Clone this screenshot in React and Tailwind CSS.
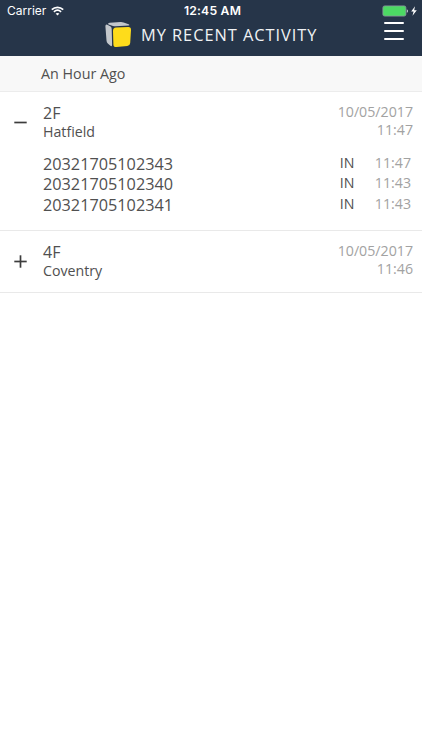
import React, { useState } from 'react';

const activity = [
  {
    id: 1,
    name: '2F',
    place: 'Hatfield',
    date: '10/05/2017',
    time: '11:47',
    items: [
      { code: '20321705102343', direction: 'IN', time: '11:47' },
      { code: '20321705102340', direction: 'IN', time: '11:43' },
      { code: '20321705102341', direction: 'IN', time: '11:43' },
    ],
  },
  {
    id: 2,
    name: '4F',
    place: 'Coventry',
    date: '10/05/2017',
    time: '11:46',
    items: [{ code: '20321705102339', direction: 'IN', time: '11:46' }],
  },
];

const WifiIcon = () => (
  <svg className="w-[13px] h-[10px]" viewBox="0 0 13 10" fill="none" stroke="#fff" strokeWidth="1.7">
    <path d="M0.8 3.6C4 0.5 9 0.5 12.2 3.6" />
    <path d="M2.9 5.8C5 3.9 8 3.9 10.1 5.8" />
    <path d="M6.5 9.6L4.6 7.6C5.6 6.7 7.4 6.7 8.4 7.6Z" fill="#fff" stroke="none" />
  </svg>
);

const BatteryIcon = () => (
  <svg className="w-[36px] h-[12px]" viewBox="0 0 36 12">
    <rect x="1.9" y="0.9" width="23" height="10.2" rx="1.8" fill="#4cd964" stroke="#8b97a0" strokeWidth="0.8" />
    <path d="M25.8 4.2C27.4 4.6 27.4 7.4 25.8 7.8Z" fill="#c9ced3" />
    <path d="M34 1.2L30.2 6.6H32.6L31.5 10.8L35.8 5.2H33.2Z" fill="#fff" />
  </svg>
);

const Logo = () => (
  <svg className="w-[27px] h-[26px]" viewBox="0 0 27 26">
    <path d="M3.2 1.5Q3.6 0.9 4.8 0.8L15.5 0.1Q17.2 0 18.6 0.5L23.6 2.3Q25.4 3.2 23.6 3.4L10.6 4.3Q9.3 4.4 8 4L3.6 2.4Q2.8 2 3.2 1.5Z" fill="#c3c7cb" />
    <path d="M0.4 4.2Q0.4 2 2.3 2.7L5.3 4.2Q6.7 5 6.7 7L7.1 22.6Q7.1 25.1 5.4 23.8L2.8 21.4Q1.6 20.3 1.5 18.4Z" fill="#c3c7cb" />
    <path d="M8 9Q8 5.8 11 5.6L23 4.9Q26.2 4.7 26 8L25.2 21Q25 23.6 22.3 23.9L11.5 25.1Q8.5 25.3 8.4 22.4Z" fill="#fedc1b" />
  </svg>
);

const Header = () => (
  <header className="h-14 bg-[#263549] text-white">
    <div className="grid grid-cols-3 items-center h-[22px] pr-[5px] pl-[7px] font-['Inter',sans-serif]">
      <div className="flex items-center gap-[5px] text-[12px]">
        <span>Carrier</span>
        <WifiIcon />
      </div>
      <div className="pl-px text-center text-[12.2px] font-semibold tracking-[0.2px]">12:45 AM</div>
      <div className="flex justify-end">
        <BatteryIcon />
      </div>
    </div>
    <div className="flex items-start h-[34px] pl-[105px] pr-[18px]">
      <Logo />
      <h1 className="ml-[9px] mt-[1px] text-[16.4px] leading-6 tracking-[0.95px] whitespace-nowrap text-[#f0f2f4]">MY RECENT ACTIVITY</h1>
      <button className="ml-auto flex flex-col gap-[6px] w-[20px]">
        <span className="h-[2px] rounded-full bg-white"></span>
        <span className="h-[2px] rounded-full bg-white"></span>
        <span className="h-[2px] rounded-full bg-white"></span>
      </button>
    </div>
  </header>
);

const ToggleIcon = ({ open }) => (
  <svg className="w-[13px] h-[13px]" viewBox="0 0 13 13" stroke="#3c3c3c" strokeWidth="1.7">
    <path d="M0.3 6.5H12.7" />
    {!open && <path d="M6.5 0.3V12.7" />}
  </svg>
);

const ActivityRow = ({ entry, open, handleClick }) => (
  <div className="border-b border-[#e9e9e9]">
    <div className="flex h-[61px] pt-[11px] pr-[9px] cursor-pointer" onClick={handleClick}>
      <div className="w-[43px] pl-[14px] pt-[13px]">
        <ToggleIcon open={open} />
      </div>
      <div className="flex-1">
        <div className="text-[16px] leading-5">{entry.name}</div>
        <div className="text-[14.2px] leading-[18px]">{entry.place}</div>
      </div>
      <div className="text-right text-[14.2px] leading-[18px] text-[#a2a2a2]">
        <div>{entry.date}</div>
        <div>{entry.time}</div>
      </div>
    </div>
    {open && (
      <div className="pl-[43px] pr-[11px] pb-[16px]">
        {entry.items.map((item) => (
          <div key={item.code} className="flex h-[20.3px]">
            <span className="flex-1 text-[16.25px] leading-[22px]">{item.code}</span>
            <span className="w-[35px] text-[14.2px] leading-[19px]">{item.direction}</span>
            <span className="text-[14.2px] leading-[19px] text-[#a2a2a2]">{item.time}</span>
          </div>
        ))}
      </div>
    )}
  </div>
);

const App = () => {
  const [openId, setOpenId] = useState(1);

  return (
    <div className="min-h-screen bg-white text-[#505050] font-['Open_Sans',sans-serif]">
      <Header />
      <div className="h-9 pl-[41px] bg-[#f8f8f8] border-b border-[#ececec] text-[14.3px] leading-[35px]">An Hour Ago</div>
      {activity.map((entry) => (
        <ActivityRow
          key={entry.id}
          entry={entry}
          open={openId === entry.id}
          handleClick={() => setOpenId(openId === entry.id ? null : entry.id)}
        />
      ))}
    </div>
  );
};

export default App;
